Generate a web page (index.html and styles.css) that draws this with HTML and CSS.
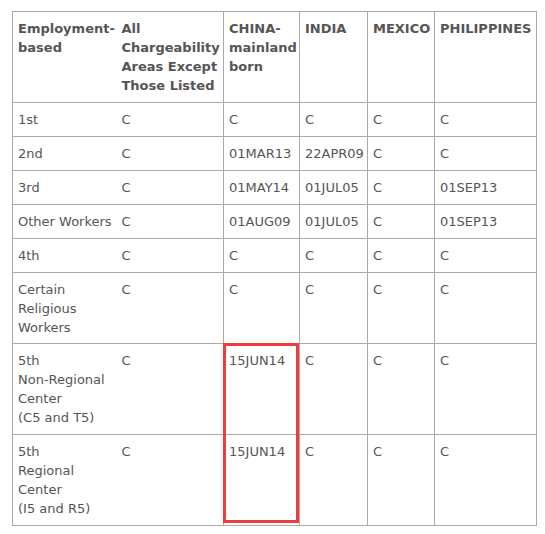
FILE: index.html
```html
<!DOCTYPE html>
<html>
<head>
<meta charset="utf-8">
<link rel="stylesheet" href="styles.css">
</head>
<body>
<div class="wrap">
<table class="bulletin">
<colgroup>
<col class="c1"><col class="c2"><col class="c3"><col class="c4"><col class="c5"><col class="c6">
</colgroup>
<thead>
<tr>
<th>Employment-<br>based</th>
<th>All Chargeability Areas Except Those Listed</th>
<th>CHINA-<br>mainland born</th>
<th>INDIA</th>
<th>MEXICO</th>
<th>PHILIPPINES</th>
</tr>
</thead>
<tbody>
<tr><td>1st</td><td>C</td><td>C</td><td>C</td><td>C</td><td>C</td></tr>
<tr><td>2nd</td><td>C</td><td>01MAR13</td><td>22APR09</td><td>C</td><td>C</td></tr>
<tr><td>3rd</td><td>C</td><td>01MAY14</td><td>01JUL05</td><td>C</td><td>01SEP13</td></tr>
<tr><td>Other Workers</td><td>C</td><td>01AUG09</td><td>01JUL05</td><td>C</td><td>01SEP13</td></tr>
<tr><td>4th</td><td>C</td><td>C</td><td>C</td><td>C</td><td>C</td></tr>
<tr><td>Certain Religious Workers</td><td>C</td><td>C</td><td>C</td><td>C</td><td>C</td></tr>
<tr><td>5th<br>Non-Regional Center<br>(C5 and T5)</td><td>C</td><td>15JUN14</td><td>C</td><td>C</td><td>C</td></tr>
<tr><td>5th<br>Regional Center<br>(I5 and R5)</td><td>C</td><td>15JUN14</td><td>C</td><td>C</td><td>C</td></tr>
</tbody>
</table>
<div class="highlight"></div>
</div>
</body>
</html>
```
FILE: styles.css
```css
html, body {
  margin: 0;
  padding: 0;
  background: #fff;
}
.wrap {
  position: relative;
  padding: 11px 0 0 12px;
}
.bulletin {
  border-collapse: collapse;
  table-layout: fixed;
  width: 524px;
  font-family: "DejaVu Sans", Verdana, sans-serif;
  font-size: 13px;
  line-height: 19px;
  color: #555;
}
.c1 { width: 104px; }
.c2 { width: 107px; }
.c3 { width: 76px; }
.c4 { width: 68px; }
.c5 { width: 67px; }
.c6 { width: 102px; }
.bulletin th,
.bulletin td {
  border: 1px solid #aaa;
  padding: 7px 5px 7px 5px;
  text-align: left;
  vertical-align: top;
}
.bulletin th:first-child,
.bulletin td:first-child {
  padding-right: 0;
}
.bulletin tbody tr.multi td,
.bulletin tbody tr:nth-child(6) td {
  padding-bottom: 6px;
}
.bulletin th {
  font-weight: bold;
  color: #555;
}
.bulletin th:nth-child(2),
.bulletin td:nth-child(2) {
  border-left-style: hidden;
}
.highlight {
  position: absolute;
  left: 223px;
  top: 343px;
  width: 76px;
  height: 180px;
  box-sizing: border-box;
  border: 3px solid #f03c3c;
}
```
